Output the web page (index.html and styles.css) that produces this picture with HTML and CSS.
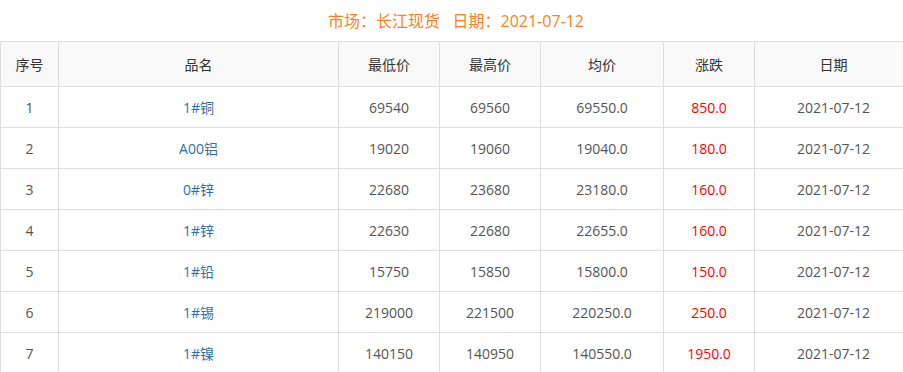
FILE: index.html
```html
<!DOCTYPE html>
<html lang="zh-CN">
<head>
<meta charset="utf-8">
<title>长江现货</title>
<link rel="stylesheet" href="styles.css">
</head>
<body>
<div class="wrap">
  <div class="title">市场：长江现货&nbsp;&nbsp;&nbsp;日期：2021-07-12</div>
  <table class="price">
    <colgroup>
      <col class="c1"><col class="c2"><col class="c3"><col class="c4"><col class="c5"><col class="c6"><col class="c7">
    </colgroup>
    <thead>
      <tr><th>序号</th><th>品名</th><th>最低价</th><th>最高价</th><th>均价</th><th>涨跌</th><th>日期</th></tr>
    </thead>
    <tbody>
      <tr><td>1</td><td class="name">1#铜</td><td>69540</td><td>69560</td><td>69550.0</td><td class="up">850.0</td><td>2021-07-12</td></tr>
      <tr><td>2</td><td class="name">A00铝</td><td>19020</td><td>19060</td><td>19040.0</td><td class="up">180.0</td><td>2021-07-12</td></tr>
      <tr><td>3</td><td class="name">0#锌</td><td>22680</td><td>23680</td><td>23180.0</td><td class="up">160.0</td><td>2021-07-12</td></tr>
      <tr><td>4</td><td class="name">1#锌</td><td>22630</td><td>22680</td><td>22655.0</td><td class="up">160.0</td><td>2021-07-12</td></tr>
      <tr><td>5</td><td class="name">1#铅</td><td>15750</td><td>15850</td><td>15800.0</td><td class="up">150.0</td><td>2021-07-12</td></tr>
      <tr><td>6</td><td class="name">1#锡</td><td>219000</td><td>221500</td><td>220250.0</td><td class="up">250.0</td><td>2021-07-12</td></tr>
      <tr><td>7</td><td class="name">1#镍</td><td>140150</td><td>140950</td><td>140550.0</td><td class="up">1950.0</td><td>2021-07-12</td></tr>
    </tbody>
  </table>
</div>
</body>
</html>
```
FILE: styles.css
```css
html, body {
  margin: 0;
  padding: 0;
  background: #fff;
  overflow: hidden;
}
body {
  font-family: "Open Sans", "Noto Sans CJK SC", sans-serif;
  font-size: 14px;
  color: #555;
}
.wrap {
  width: 912px;
}
.title {
  height: 41px;
  line-height: 42px;
  text-align: center;
  font-size: 16px;
  color: #ff7f1f;
}
.price {
  width: 912px;
  border-collapse: collapse;
  table-layout: fixed;
}
.c1 { width: 58px; }
.c2 { width: 280px; }
.c3 { width: 101px; }
.c4 { width: 101px; }
.c5 { width: 123px; }
.c6 { width: 91px; }
.c7 { width: 158px; }
.price th, .price td {
  border: 1px solid #ddd;
  text-align: center;
  padding: 0;
  font-weight: normal;
}
.price th {
  height: 44px;
  background: #f9f9f9;
  color: #333;
}
.price td {
  height: 40px;
  color: #555;
}
.price td.name {
  color: #2f6fa3;
}
.price td.up {
  color: #ff0000;
}
```
